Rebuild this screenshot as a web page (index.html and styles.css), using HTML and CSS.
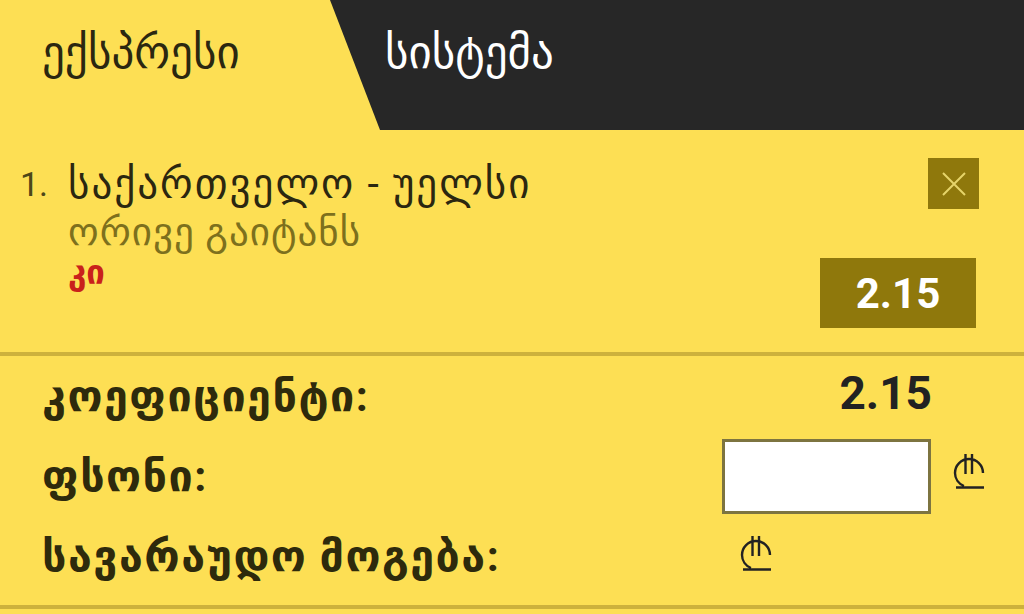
FILE: index.html
```html
<!DOCTYPE html>
<html lang="ka">
<head>
    <meta charset="UTF-8">
    <meta name="viewport" content="width=device-width, initial-scale=1.0">
    <title>ბილეთი</title>
    <link rel="stylesheet" href="styles.css">
</head>
<body>

<div class="tabs">
    <div class="tab tab-active">ექსპრესი</div>
    <div class="tab tab-dark">სისტემა</div>
</div>

<div class="bet">
    <div class="bet-num">1.</div>
    <div class="bet-info">
        <div class="bet-match">საქართველო - უელსი</div>
        <div class="bet-market">ორივე გაიტანს</div>
        <div class="bet-pick">კი</div>
    </div>
    <div class="bet-side">
        <button class="close-btn" aria-label="close">
            <svg width="26" height="26" viewBox="0 0 26 26"><path d="M2 2L24 24M24 2L2 24" stroke="#e6d46a" stroke-width="2" fill="none"/></svg>
        </button>
        <div class="odd-btn">2.15</div>
    </div>
</div>

<div class="summary">
    <div class="row">
        <div class="label">კოეფიციენტი:</div>
        <div class="total">2.15</div>
    </div>
    <div class="row">
        <div class="label">ფსონი:</div>
        <div class="stake">
            <input type="text" class="stake-input">
            <svg class="lari" width="32" height="36" viewBox="0 0 32 36"><path d="M30 20A14 14 0 0 0 2 20A14 14 0 0 0 11 33M3 34.5H31M12.5 1V21M19 1V21" stroke="#222" stroke-width="2.4" fill="none"/></svg>
        </div>
    </div>
    <div class="row">
        <div class="label">სავარაუდო მოგება:</div>
        <div class="win">
            <svg class="lari" width="32" height="36" viewBox="0 0 32 36"><path d="M30 20A14 14 0 0 0 2 20A14 14 0 0 0 11 33M3 34.5H31M12.5 1V21M19 1V21" stroke="#222" stroke-width="2.4" fill="none"/></svg>
        </div>
    </div>
</div>

</body>
</html>
```

FILE: styles.css
```css
body {
    margin: 0;
    padding: 0;
    background-color: #fddf54;
    font-family: Roboto, "DejaVu Sans", sans-serif;
    color: #2b2710;
    width: 1024px;
    height: 614px;
    overflow: hidden;
}
.tabs {
    display: flex;
    height: 130px;
}
.tab {
    font-size: 45px;
    line-height: 50px;
    padding-top: 28px;
    box-sizing: border-box;
}
.tab-active {
    width: 330px;
    padding-left: 42px;
    color: #2b2710;
}
.tab-dark {
    flex: 1;
    background-color: #272727;
    color: #fff;
    padding-left: 55px;
    clip-path: polygon(0 0, 100% 0, 100% 100%, 50px 100%);
}
.bet {
    display: flex;
    height: 226px;
    padding: 28px 48px 0 20px;
    box-sizing: border-box;
    border-bottom: 4px solid #cdb13c;
}
.bet-num {
    font-size: 34px;
    color: #4e4718;
    width: 48px;
    padding-top: 6px;
}
.bet-info {
    flex: 1;
}
.bet-match {
    font-size: 41px;
    letter-spacing: 2px;
    line-height: 52px;
}
.bet-market {
    font-size: 39px;
    letter-spacing: 1px;
    color: #7d701d;
    line-height: 44px;
}
.bet-pick {
    font-size: 33px;
    font-weight: bold;
    color: #c9211b;
    line-height: 38px;
}
.bet-side {
    display: flex;
    flex-direction: column;
    align-items: flex-end;
}
.close-btn {
    width: 51px;
    height: 51px;
    border: none;
    padding: 0;
    margin-right: -3px;
    background-color: #8f780c;
    display: flex;
    align-items: center;
    justify-content: center;
}
.odd-btn {
    margin-top: 49px;
    width: 156px;
    height: 70px;
    background-color: #8f780c;
    color: #fff;
    font-family: Roboto, sans-serif;
    font-weight: bold;
    font-size: 42px;
    display: flex;
    align-items: center;
    justify-content: center;
}
.summary {
    padding: 0 92px 0 42px;
    height: 253px;
    box-sizing: border-box;
    border-bottom: 4px solid #cdb13c;
}
.row {
    display: flex;
    justify-content: space-between;
    align-items: center;
    height: 80px;
}
.label {
    font-size: 43px;
    letter-spacing: 1.5px;
    font-weight: bold;
    color: #2e2a0c;
}
.total {
    font-family: Roboto, sans-serif;
    font-weight: bold;
    font-size: 46px;
    color: #222;
    align-self: flex-start;
    padding-top: 10px;
}
.stake {
    display: flex;
    align-items: center;
    gap: 22px;
    margin-right: -53px;
}
.stake-input {
    width: 209px;
    height: 75px;
    box-sizing: border-box;
    border: 3px solid #7d7440;
    background: #fff;
}
.lari {
    display: block;
}
.stake .lari {
    margin-top: -11px;
}
.win {
    margin-right: 160px;
    align-self: flex-start;
    padding-top: 19px;
}
```
